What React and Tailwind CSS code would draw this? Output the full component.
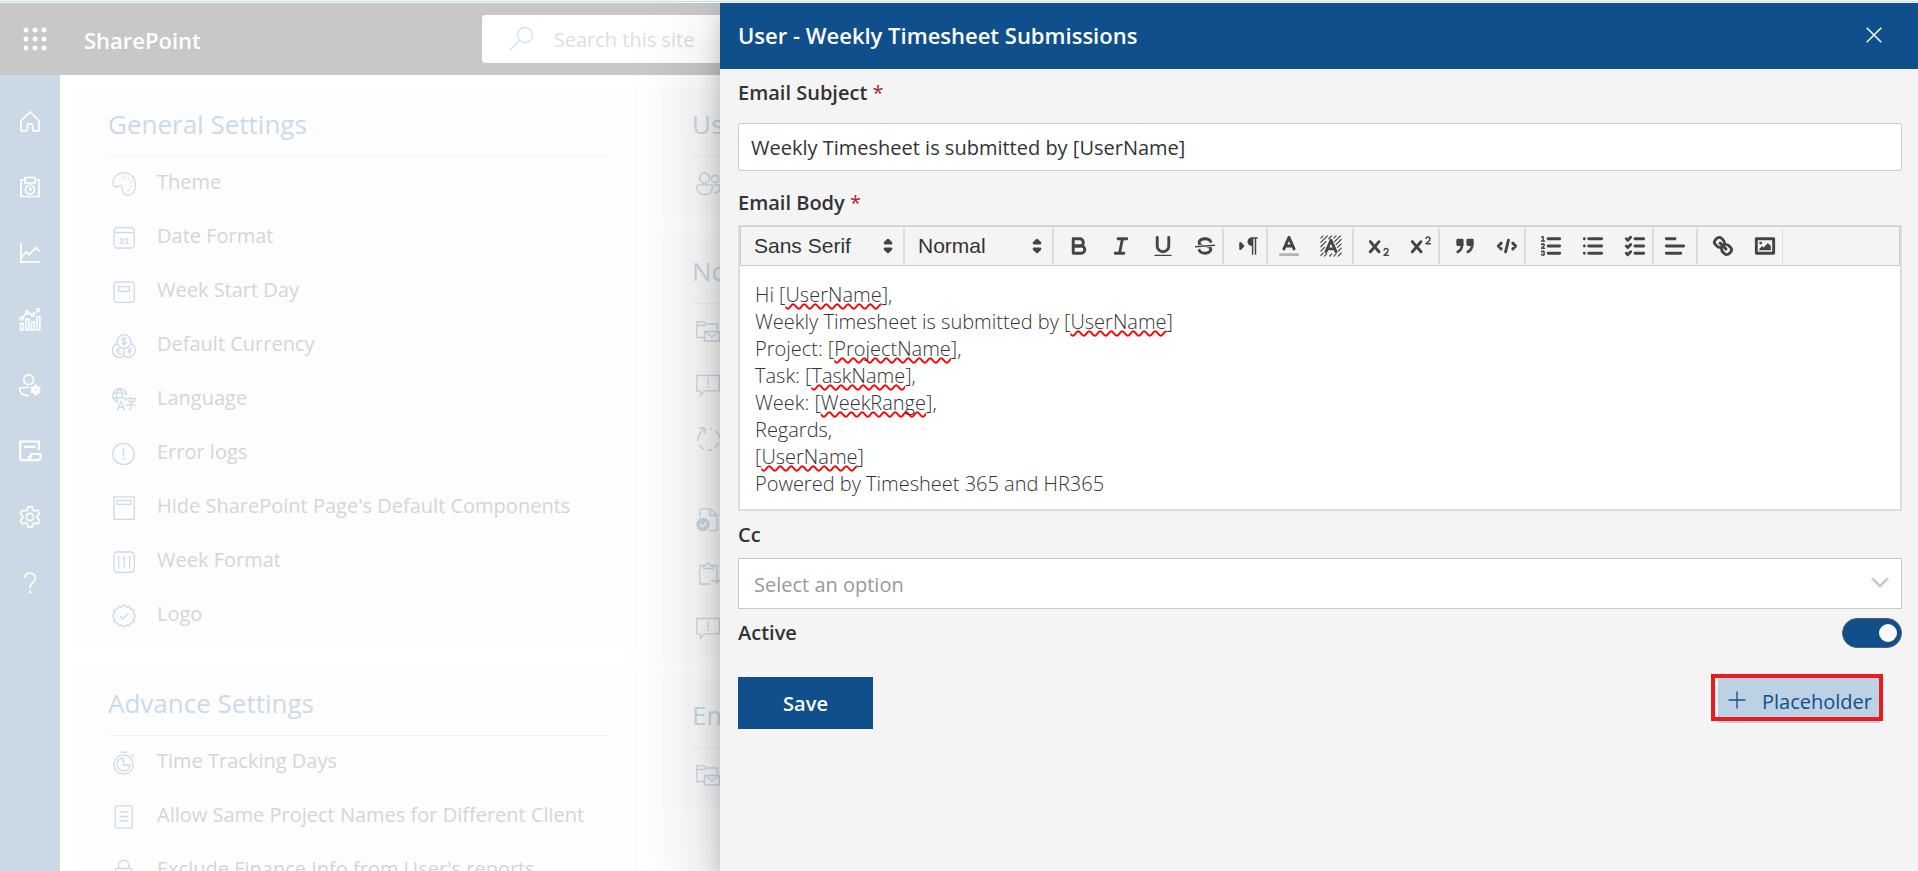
import React from "react";

/* ---------- outline icons of the settings page (24 x 24 grid) ---------- */

const Line = ({ children, className = "", w = 1.3 }) => (
  <svg
    viewBox="0 0 24 24"
    fill="none"
    stroke="currentColor"
    strokeWidth={w}
    aria-hidden="true"
    className={"size-6 shrink-0 " + className}
  >
    {children}
  </svg>
);

const WaffleIcon = () => (
  <svg viewBox="0 0 24 24" fill="currentColor" aria-hidden="true" className="size-6">
    {[3, 12, 21].map((y) => [3, 12, 21].map((x) => <circle key={x + "-" + y} cx={x} cy={y} r="2.5" />))}
  </svg>
);

const HomeIcon = () => (
  <Line w={1.7}>
    <path d="M3 11.5 12 3l9 8.5V21a.9.9 0 0 1-.9.9H15.600a.9.9 0 0 1-.9-.9v-4.500a1.500 1.500 0 0 0-1.500-1.500h-2.400a1.500 1.500 0 0 0-1.500 1.500V21a.9.9 0 0 1-.9.900H3.900A.9.9 0 0 1 3 21Z" />
  </Line>
);
const TimesheetIcon = () => (
  <Line w={1.7}>
    <path d="M7 5H3v16.500h18V5h-4M7 2.500h10v5.500H7z" />
    <circle cx="12" cy="14.500" r="4.500" />
    <path d="M12 12v2.700h2" />
  </Line>
);
const TrendIcon = () => (
  <Line w={1.7}>
    <path d="M3 2v19.200h19M3.500 16.500 8 11l2.800 2.700 7-7 3.700 3.600" />
  </Line>
);
const AnalyticsIcon = () => (
  <Line w={1.6}>
    <path d="M2.500 23v-6.500h2.800V23ZM8 23V12h2.800v11ZM13.500 23v-8h2.800v8ZM19 23V9.500h2.800V23Z" />
    <path d="M4.700 10.300 8 6.700M10.800 6.200l2.200 1M16 6.500l3-2.500" />
    <circle cx="3.500" cy="11.500" r="1.500" />
    <circle cx="9.200" cy="5.500" r="1.500" />
    <circle cx="14.600" cy="8" r="1.500" />
    <circle cx="20.200" cy="3" r="1.500" />
  </Line>
);
const UserGearIcon = () => (
  <Line w={1.7}>
    <circle cx="10.700" cy="6.600" r="5" />
    <path d="M11 14.500H3.700c-1.700 0-2 1.500-2 2.400 0 3 3 5.400 7 5.400h2" />
    <path
      d="M17.500 11.600v2.400M17.500 20v2.400M12.800 14.300l2 1.200M20.200 18.500l2 1.200M12.800 19.700l2-1.200M20.200 15.500l2-1.200"
      strokeWidth="2.600"
    />
    <circle cx="17.500" cy="17" r="2.600" strokeWidth="3" />
  </Line>
);
const FormIcon = () => (
  <Line w={2.2}>
    <path d="M21 11V2.500H2.200v16.200a2.500 2.500 0 0 0 2.500 2.500h5M6 7.800h11.500M10.800 18.200v3h8.700a3 3 0 0 0 3-3V15H13v3.200Z" />
  </Line>
);
const GearIcon = () => (
  <Line w={1.7}>
    <circle cx="12" cy="12" r="3.600" />
    <path
      strokeLinejoin="round"
      d="M9.900 1.800h4.200l.6 3.100 1.900 1.100 3-1 2.100 3.700-2.400 2.100v2.400l2.400 2.100-2.100 3.700-3-1-1.900 1.100-.6 3.100H9.900l-.6-3.100L7.400 18l-3 1-2.100-3.700 2.400-2.100v-2.400L2.300 8.700 4.400 5l3 1 1.900-1.100Z"
    />
  </Line>
);
const HelpIcon = () => (
  <Line w={1.7}>
    <path d="M6.700 6.800C7 3.700 9.200 2.200 12 2.200c3 0 5.200 1.900 5.200 4.700 0 2.400-1.300 3.600-2.800 5-1.500 1.300-2.300 2.400-2.300 5" />
    <path d="M10.900 20.800h2.300" strokeWidth="2.400" />
  </Line>
);

const PaletteIcon = () => (
  <Line>
    <path d="M1 12.500C.7 6 5.500.7 12 .7c6.500 0 11.300 5 11.300 11.800 0 6-2 10.800-6.800 10.800-3.500 0-6-2.200-6-5.800 0-1.800.3-4.200-1.700-4.200-2 0-3.200 2-5.300 1.400C1.800 14.300 1 13.600 1 12.500Z" />
    <path d="M11 5.500h1.600M15.500 7h1.600M18.500 10.500h1.600M18.200 14.500h1.600M15.800 18.300h1.600" strokeWidth="1.700" />
  </Line>
);
const DateIcon = () => (
  <Line>
    <rect x="2" y="1.700" width="20.300" height="20.300" rx="3.500" />
    <path d="M2 6.500h20.300" />
    <text x="12.200" y="18" textAnchor="middle" stroke="none" fill="currentColor" className="font-['Liberation_Sans'] text-[9px] font-bold">
      21
    </text>
  </Line>
);
const WeekStartIcon = () => (
  <Line>
    <rect x="2" y="2" width="20.300" height="20.300" rx="3" />
    <path d="M6.800 6.700h10.700v4.600H6.800z" />
  </Line>
);
const CurrencyIcon = () => (
  <Line>
    <circle cx="12" cy="7.500" r="6.800" />
    <path d="M5.800 9.500A7 7 0 0 0 8 23.300a7 7 0 0 0 4-1.600 7 7 0 0 0 11.300-5.700 7 7 0 0 0-5.100-6.500" />
    <path d="M14 4.900c-.6-.7-3.800-1-3.800.7 0 1.900 3.900 1.100 3.900 3 0 1.800-3.300 1.600-4.200.7M12 3v9M10 14.200c-2.200-1-4.600.3-4.600 2.900 0 2.400 2 3.700 4.400 2.800M3.800 16.500h4M15.500 13.500l2 3 2.300-3M17.500 16.500v4M15.500 17.500h4M12 14v8" />
  </Line>
);
const LanguageIcon = () => (
  <Line>
    <path d="M14.500 7.800A6.900 6.900 0 1 0 6 14.300M.8 5.200h13.200M.8 9.800H13M7.500.8C3.500 4 3.500 11 6 14.300M7.500.8c2.500 2 3 5 2.900 9" />
    <path d="m5.500 22.500 3.600-9 3.700 9M6.800 19.400h4.600" />
    <path d="M13.500 13v-2.400h9.800V13M18.300 8.500v2M15.500 13.500h6l-2.500 2.300v4.500c0 1-1 1.500-2.200 1.300M13.500 17h10" />
  </Line>
);
const ErrorIcon = () => (
  <Line>
    <circle cx="11.500" cy="12" r="10.700" />
    <path d="M11.500 6.500v7.800M11.500 15.800v2" strokeWidth="1.600" />
  </Line>
);
const PageIcon = () => (
  <Line>
    <path d="M2 .8h20.300v22.500H2zM5.200 4.300h13.500v4H5.200z" />
  </Line>
);
const WeekFormatIcon = () => (
  <Line>
    <rect x="2" y="2" width="20.300" height="20.300" rx="3.500" />
    <path d="M6.700 6v12.500M12.200 6v12.500M17.600 6v12.500" />
  </Line>
);
const BadgeIcon = () => (
  <Line>
    <path
      strokeLinejoin="round"
      d="M12 .8 14.500 3l3.200-.9 1.100 3.100 3.200 1-.6 3.200L23.300 12l-1.900 2.600.6 3.200-3.200 1-1.100 3.100-3.200-.9L12 23.200 9.500 21l-3.200.9-1.100-3.100-3.200-1 .6-3.200L.7 12l1.900-2.600L2 6.200l3.200-1 1.100-3.100 3.200.9Z"
    />
    <path d="m8 12.300 2.700 2.700 5.500-5.500" />
  </Line>
);
const StopwatchIcon = () => (
  <Line>
    <circle cx="11.500" cy="13.500" r="9.700" />
    <path d="M11.500 7v7h6.500M8 1.200h7M19.500 3.500l2.300 2.300" />
    <path d="M18 13.500A6.500 6.500 0 1 1 11.500 7" />
  </Line>
);
const DocumentIcon = () => (
  <Line>
    <rect x="3.200" y=".8" width="17" height="22.400" rx="2" />
    <path d="M7.500 7h9M7.500 11.500h9M7.500 16h9" />
  </Line>
);
const LockIcon = () => (
  <Line>
    <rect x="3.200" y="9.500" width="17" height="13.700" rx="2" />
    <path d="M6.500 9.500V6a5.300 5.300 0 0 1 10.500 0v3.500" />
  </Line>
);
const PeopleIcon = () => (
  <Line>
    <circle cx="8.500" cy="6" r="5" />
    <circle cx="19" cy="7" r="3.500" />
    <path d="M.8 14.800a2 2 0 0 1 2-2h11.700a2 2 0 0 1 2 2c0 4.800-3 7.700-7.900 7.700S.8 19.600.8 14.800ZM18 12.800h4.500c1 0 1.800.8 1.800 2 0 3.800-2.300 6-6.300 5.900" />
  </Line>
);
const MailFolderIcon = () => (
  <Line>
    <path d="M8 18.500H.8V2.800h7.700l2 2.200h10.800v6M.8 6.500h8l1.700-1.500" />
    <path d="M8.500 12.500h15v9.500h-15zM8.500 12.800l7.500 5 7.500-5" />
  </Line>
);
const MessageAlertIcon = () => (
  <Line>
    <path d="M.8 2.500h22.500v15.300H8.500l-4 4.500v-4.500H.8Z" />
    <path d="M12 5.500v6M12 13v2" />
  </Line>
);
const CycleIcon = () => (
  <Line>
    <path d="M9 1v6M3 1h6M2 14a10 10 0 0 1 1.500-7L8 1.500M3 17.500a10.500 10.500 0 0 0 5 4.500M11 23h5M19 20.500a11 11 0 0 0 3.500-5M23.300 11c-.2-3-1.400-5.500-3.500-7.300M13.500 1.500 16 2" />
  </Line>
);
const DocCheckIcon = () => (
  <Line>
    <path d="M4 9V2.500A1.700 1.700 0 0 1 5.700.8h8.500l7 6.500V21a1.700 1.700 0 0 1-1.700 1.700H13M14 .8v6.700h7" />
    <circle cx="7" cy="16.500" r="6.700" fill="currentColor" stroke="none" />
    <path d="m3.800 16.500 2.500 2.500 4.300-4.300" stroke="#f6f6f6" strokeWidth="1.800" />
  </Line>
);
const ClipboardIcon = () => (
  <Line>
    <path d="M7.500 3.500H3.800V22h10.500M17 3.500h4V16M7.500 6.500v-3h2.700a2 2 0 0 1 4 0H17v3ZM15 19h8M20 16l3.200 3-3.200 3" />
  </Line>
);

/* ---------- editor toolbar icons (18 x 18 grid) ---------- */

const Tool = ({ children }) => (
  <svg
    viewBox="0 0 18 18"
    fill="none"
    stroke="#444"
    strokeWidth="2"
    strokeLinecap="round"
    strokeLinejoin="round"
    aria-hidden="true"
    className="size-[26px]"
  >
    {children}
  </svg>
);
const X_SHAPE =
  "M9.65,5.241a1,1,0,0,0-1.409.108L6,7.964,3.759,5.349A1,1,0,0,0,2.192,6.59178Q2.21541,6.6213,2.241,6.649L4.684,9.5,2.241,12.35A1,1,0,0,0,3.71,13.70722q0.02557-.02768.049-0.05722L6,11.036,8.241,13.65a1,1,0,1,0,1.567-1.24277Q9.78459,12.3777,9.759,12.35L7.316,9.5,9.759,6.651A1,1,0,0,0,9.65,5.241Z";
const TWO_TAIL =
  "H13.861a3.858,3.858,0,0,0,1.914-2.975,1.8,1.8,0,0,0-1.6-1.751A1.921,1.921,0,0,0,12.021,11.7a0.5,0.5,0,1,0,.957.291a0.914,0.914,0,0,1,1.053-.725,0.81,0.81,0,0,1,.744.762c0,1.076-1.17,1.87-1.94,2.431A1.456,1.456,0,0,0,12,15.5a0.5,0.5,0,0,0,.5.5h3A0.5,0.5,0,0,0,15.5,15Z";

/* Groups made of drop-down pickers centre their drawing; plain buttons sit it to the right. */
const TOOL_GROUPS = [
  { tools: [
    ["Bold", <><path d="M5,4H9.500A2.500,2.500,0,0,1,12,6.500v0A2.500,2.500,0,0,1,9.500,9H5V4Z" /><path d="M5,9h5.500A2.500,2.500,0,0,1,13,11.500v0A2.500,2.500,0,0,1,10.500,14H5V9Z" /></>],
    ["Italic", <path d="M7 4h6M5 14h6M8 14l2-10" />],
    ["Underline", <><path d="M5,3V9a4.012,4.012,0,0,0,4,4H9a4.012,4.012,0,0,0,4-4V3" /><rect x="3" y="15" width="12" height="1" rx=".5" fill="#444" stroke="none" /></>],
    ["Strike", <>
      <path d="M15.500 8.500l-13 1" strokeWidth="1" />
      <path fill="#444" stroke="none" d="M9.007,8C6.542,7.791,6,7.519,6,6.500,6,5.792,7.283,5,9,5c1.571,0,2.765.679,2.969,1.309a1,1,0,0,0,1.900-.617C13.356,4.106,11.354,3,9,3,6.200,3,4,4.538,4,6.500a3.200,3.200,0,0,0,.5,1.843Z" />
      <path fill="#444" stroke="none" d="M8.984,10C11.457,10.208,12,10.479,12,11.500c0,0.708-1.283,1.500-3,1.500-1.571,0-2.765-.679-2.969-1.309a1,1,0,1,0-1.900.617C4.644,13.894,6.646,15,9,15c2.800,0,5-1.538,5-3.500a3.200,3.200,0,0,0-.5-1.843Z" />
    </>],
  ] },
  { tools: [
    ["Text direction", <>
      <path d="M3 11l2-2-2-2z" fill="#444" strokeWidth="1.500" />
      <path d="M15,3H11a3,3,0,0,0,0,6V15h1V4h1V15h1V4h1Z" fill="#444" stroke="none" />
    </>],
  ] },
  { picker: true, tools: [
    ["Text colour", <><path d="M3 15h12" stroke="#b4b4b4" /><path d="M5.500 11 9 3l3.500 8M11.630 9H6.380" /></>],
    ["Background colour", <>
      <path
        strokeWidth=".8"
        d="M2 3.500 3.500 2M2 6.500 6.500 2M2 9.500 5.500 6M7.500 4 9.500 2M2 12.500l2.500-2.500M2 15.500 3.500 14M4.500 16l1.500-1.500M8 16l1.500-1.500M11 16l1.500-1.500M14 16l2-2M11 3.500 12.500 2M11.500 6 15.500 2M12.500 8 16 4.500M13.500 10 16 7.500M14 12.500l2-2"
      />
      <path d="M5.500 13 9 5l3.500 8M11.630 11H6.380" />
    </>],
  ] },
  { tools: [
    ["Subscript", <g fill="#444" stroke="none"><path d={"M15.500,15" + TWO_TAIL} /><path d={X_SHAPE} /></g>],
    ["Superscript", <g fill="#444" stroke="none"><path d={"M15.500,15" + TWO_TAIL} transform="translate(0 -8)" /><path d={X_SHAPE} /></g>],
  ] },
  { tools: [
    ["Quote", <><path d="M4 5h3v3H4zM11 5h3v3h-3z" fill="#444" /><path d="M7,8c0,4.031-3,5-3,5M14,8c0,4.031-3,5-3,5" /></>],
    ["Code block", <path d="M5 7 3 9l2 2M13 7l2 2-2 2M10 5 8 13" />],
  ] },
  { tools: [
    ["Numbered list", <>
      <path d="M7 4h8M7 9h8M7 14h8" />
      <path strokeWidth="1" d="M2.500 5.500h2M2.600 2.900 3.500 2.500v3M4.500,10.500h-2c0-.234,1.850-1.076,1.850-2.234A0.959,0.959,0,0,0,2.500,8.156M2.500,14.846a0.959,0.959,0,0,0,1.850-.109A0.700,0.700,0,0,0,3.750,14a0.688,0.688,0,0,0,.6-0.736,0.959,0.959,0,0,0-1.850-.109" />
    </>],
    ["Bullet list", <path d="M6 4h9M6 9h9M6 14h9M3 4h.01M3 9h.01M3 14h.01" />],
    ["Check list", <path d="M9 4h6M9 9h6M9 14h6M3 4l1 1 2-2M3 9l1 1 2-2M3 14l1 1 2-2" />],
  ] },
  { picker: true, tools: [["Align", <path d="M3 4h6M3 9h12M3 14h10" />]] },
  { tools: [
    ["Link", <path d="M7 7l4 4M8.900,4.577a3.476,3.476,0,0,1,.36,4.679A3.476,3.476,0,0,1,4.577,8.900C3.185,7.500,2.035,6.400,4.217,4.217S7.500,3.185,8.900,4.577ZM13.423,9.100a3.476,3.476,0,0,0-4.679-.36,3.476,3.476,0,0,0,.36,4.679c1.392,1.392,2.500,2.542,4.679.36S14.815,10.500,13.423,9.100Z" />],
    ["Image", <><path d="M3 4h12v10H3z" /><circle cx="6" cy="7" r="1" fill="#444" stroke="none" /><path d="M5 12v-1l2-2 1 1 3-3 2 2v3z" fill="#444" stroke="none" /></>],
  ] },
];

/* ---------- page data ---------- */

const NAV = [
  ["Home", HomeIcon],
  ["Timesheets", TimesheetIcon],
  ["Trends", TrendIcon],
  ["Analytics", AnalyticsIcon],
  ["Users", UserGearIcon],
  ["Forms", FormIcon],
  ["Settings", GearIcon],
  ["Help", HelpIcon],
];

const GENERAL = [
  ["Theme", PaletteIcon],
  ["Date Format", DateIcon],
  ["Week Start Day", WeekStartIcon],
  ["Default Currency", CurrencyIcon],
  ["Language", LanguageIcon],
  ["Error logs", ErrorIcon],
  ["Hide SharePoint Page's Default Components", PageIcon],
  ["Week Format", WeekFormatIcon],
  ["Logo", BadgeIcon],
];
const ADVANCE = [
  ["Time Tracking Days", StopwatchIcon],
  ["Allow Same Project Names for Different Client", DocumentIcon],
  ["Exclude Finance Info from User's reports", LockIcon],
];

const SettingsCard = ({ title, items }) => (
  <section className="bg-[#fdfdfd] px-[30px] pb-1">
    <h2 className="h-[69px] border-b border-[#f3f3f3] pt-[18px] text-[26px] leading-[36px] text-[#cbdae9]">{title}</h2>
    <ul>
      {items.map(([label, Icon, tall], i) => (
        <li key={i} className={"flex items-center gap-[21px] pl-1 " + (tall ? "h-[81px] pb-[27px]" : "h-[54px]")}>
          <span className="text-[#cbdae9]">
            <Icon />
          </span>
          <span className="-mt-1 text-xl whitespace-nowrap text-[#d5d5d5]">{label}</span>
        </li>
      ))}
    </ul>
  </section>
);

const Misspelled = ({ children }) => (
  <span className="underline decoration-[#ff0000] decoration-wavy decoration-[1.5px] underline-offset-1 [text-decoration-skip-ink:none]">{children}</span>
);

const PickerArrows = () => (
  <svg viewBox="0 0 18 18" aria-hidden="true" className="pointer-events-none absolute top-[5px] right-0.5 size-[26px]" fill="#444" stroke="#444" strokeWidth="2" strokeLinejoin="round">
    <path d="M7 11l2 2 2-2zM7 7l2-2 2 2z" />
  </svg>
);

const Picker = ({ label, value, options, width }) => (
  <div className={"relative border-r-2 border-[#ddd] " + width}>
    <select
      aria-label={label}
      defaultValue={value}
      className="h-9 w-full appearance-none bg-transparent pl-[13px] font-['Liberation_Sans',Arial,sans-serif] text-[21px] leading-9 text-[#333] outline-none"
    >
      {options.map((o) => (
        <option key={o}>{o}</option>
      ))}
    </select>
    <PickerArrows />
  </div>
);

export default function App() {
  return (
    <div className="flex h-screen flex-col overflow-hidden bg-white font-['Open_Sans','Noto_Sans',sans-serif]">
      <div className="relative z-20 h-[3px] shrink-0 border-t border-b border-[#f2f7fa] bg-[#cfe0e6]" />

      <div className="relative flex min-h-0 flex-1 flex-col overflow-hidden">
        <header className="flex h-[72px] shrink-0 items-center bg-[#c8c8c8] text-white">
          <button type="button" aria-label="App launcher" className="ml-[23px]">
            <WaffleIcon />
          </button>
          <span className="ml-[37px] pt-0.5 text-[22px] font-semibold">SharePoint</span>
          <label className="ml-[281px] flex h-12 w-[560px] items-center rounded bg-white pl-[27px]">
            <Line className="text-[#cfe3f6]" w={1.4}>
              <circle cx="16" cy="8" r="7.500" />
              <path d="M10.500 13.500.8 23.200" />
            </Line>
            <input
              type="search"
              aria-label="Search this site"
              placeholder="Search this site"
              className="ml-[21px] flex-1 bg-transparent pt-0.5 text-xl outline-none placeholder:text-[#dedede]"
            />
          </label>
        </header>

        <div className="flex min-h-0 flex-1">
          <nav aria-label="Main" className="flex w-[60px] shrink-0 flex-col items-center bg-[#cbd9e6] pt-[13px] text-white">
            {NAV.map(([label, Icon]) => (
              <a key={label} href="#" aria-label={label} className="flex h-[66px] w-full shrink-0 items-center justify-center">
                <Icon />
              </a>
            ))}
          </nav>

          <main className="grid min-w-0 flex-1 auto-cols-[560px] grid-flow-col items-start gap-6 overflow-hidden pt-[13px] pl-[18px]">
            <div className="flex flex-col gap-5">
              <SettingsCard title="General Settings" items={GENERAL} />
              <SettingsCard title="Advance Settings" items={ADVANCE} />
            </div>
            <div className="flex flex-col gap-5">
              <SettingsCard title="Users" items={[["", PeopleIcon]]} />
              <SettingsCard
                title="Notifications"
                items={[
                  ["", MailFolderIcon],
                  ["", MessageAlertIcon],
                  ["", CycleIcon, true],
                  ["", DocCheckIcon],
                  ["", ClipboardIcon],
                  ["", MessageAlertIcon],
                ]}
              />
              <SettingsCard title="Email" items={[["", MailFolderIcon]]} />
            </div>
          </main>
        </div>

        <aside
          aria-labelledby="panel-title"
          className="absolute inset-y-0 right-0 left-[720px] z-10 flex flex-col bg-[#f4f4f4] text-[#333] shadow-[0_37px_84px_rgba(0,0,0,0.22),0_7px_21px_rgba(0,0,0,0.18)]"
        >
          <div className="flex h-[66px] shrink-0 items-center justify-between bg-[#0f4f8b] pr-9 pb-0.5 pl-[18px] text-white">
            <h1 id="panel-title" className="text-[22px] font-semibold">
              User - Weekly Timesheet Submissions
            </h1>
            <button type="button" aria-label="Close">
              <svg viewBox="0 0 16 16" aria-hidden="true" className="size-4" stroke="currentColor" strokeWidth="1.500">
                <path d="M.7.7 15.300 15.300M15.300.7.7 15.300" />
              </svg>
            </button>
          </div>

          <form className="flex flex-col pr-4 pl-[18px]" onSubmit={(e) => e.preventDefault()}>
            <label htmlFor="subject" className="mt-2 text-xl leading-8 font-semibold">
              Email Subject <span className="font-normal text-[#a4262c]">*</span>
            </label>
            <input
              id="subject"
              defaultValue="Weekly Timesheet is submitted by [UserName]"
              className="mt-3.5 h-12 rounded-[3px] border border-[#ccc] bg-white px-3 text-xl outline-none"
            />

            <span id="body-label" className="mt-4 text-xl leading-8 font-semibold">
              Email Body <span className="font-normal text-[#a4262c]">*</span>
            </span>
            <div className="mt-1.5 border-2 border-[#ddd] bg-white">
              <div role="toolbar" aria-label="Formatting" className="flex h-[39px] items-center border border-t-0 border-[#ccc] bg-[#f4f4f4] shadow-[0_-1px_0_#ccc]">
                <Picker label="Font" value="Sans Serif" options={["Sans Serif", "Serif", "Monospace"]} width="w-[164px]" />
                <Picker label="Size" value="Normal" options={["Small", "Normal", "Large", "Huge"]} width="w-[149px]" />
                {TOOL_GROUPS.map(({ picker, tools }, i) => (
                  <div key={i} className="flex border-r-2 border-[#ddd] last:border-r">
                    {tools.map(([label, drawing]) => (
                      <button
                        key={label}
                        type="button"
                        aria-label={label}
                        className={"flex h-9 w-[42px] items-center justify-center " + (picker ? "" : "pl-2")}
                      >
                        <Tool>{drawing}</Tool>
                      </button>
                    ))}
                  </div>
                ))}
              </div>
              <div
                role="textbox"
                aria-multiline="true"
                aria-labelledby="body-label"
                tabIndex={0}
                className="px-[15px] pt-[15px] pb-3 text-xl leading-[27px] font-light"
              >
                <p>Hi [<Misspelled>UserName</Misspelled>],</p>
                <p>Weekly Timesheet is submitted by [<Misspelled>UserName</Misspelled>]</p>
                <p>Project: [<Misspelled>ProjectName</Misspelled>],</p>
                <p>Task: [<Misspelled>TaskName</Misspelled>],</p>
                <p>Week: [<Misspelled>WeekRange</Misspelled>],</p>
                <p>Regards,</p>
                <p>[<Misspelled>UserName</Misspelled>]</p>
                <p>Powered by Timesheet 365 and HR365</p>
              </div>
            </div>

            <label htmlFor="cc" className="mt-2 text-xl leading-8 font-semibold">
              Cc
            </label>
            <div className="relative mt-[7px]">
              <select id="cc" defaultValue="" className="h-[51px] w-full appearance-none border border-[#c8c8c8] bg-white px-[15px] pt-0.5 text-xl text-[#999] outline-none">
                <option value="">Select an option</option>
              </select>
              <svg viewBox="0 0 18 11" aria-hidden="true" className="pointer-events-none absolute top-[19px] right-[13px] h-[11px] w-[18px]" fill="none" stroke="#ccc" strokeWidth="2.800">
                <path d="m1 1.200 8 7.800 8-7.800" />
              </svg>
            </div>

            <div className="mt-2 flex items-center justify-between">
              <label htmlFor="active" className="text-xl leading-8 font-semibold">
                Active
              </label>
              <input
                id="active"
                type="checkbox"
                role="switch"
                defaultChecked
                className="h-[30px] w-[60px] appearance-none rounded-full border border-[#605e5c] bg-[#0f4f8b] before:mt-[5px] before:ml-9 before:block before:size-[18px] before:rounded-full before:bg-white"
              />
            </div>

            <div className="mt-7 flex items-start justify-between">
              <button type="submit" className="h-[52px] w-[135px] bg-[#0f4f8b] pt-0.5 text-xl font-semibold text-white">
                Save
              </button>
              <div className="relative mr-[22px]">
                <button type="button" className="flex h-[46px] items-center gap-4 bg-[#bcd1e4] pr-2 pl-2.5 text-xl whitespace-nowrap text-[#0f4f8b]">
                  <svg viewBox="0 0 18 18" aria-hidden="true" className="size-[18px] shrink-0" stroke="currentColor" strokeWidth="1.300">
                    <path d="M9 .5v17M.5 9h17" />
                  </svg>
                  <span className="pt-1">Placeholder</span>
                </button>
                <span aria-hidden="true" className="pointer-events-none absolute -top-[3px] -right-[3px] bottom-0.5 -left-[7px] border-4 border-[#e81c1c]" />
              </div>
            </div>
          </form>
        </aside>
      </div>
    </div>
  );
}
